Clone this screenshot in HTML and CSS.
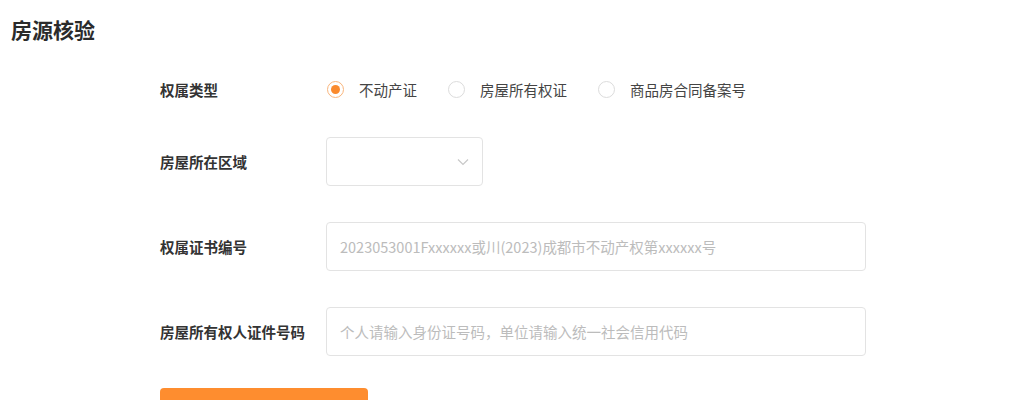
FILE: index.html
```html
<!DOCTYPE html>
<html lang="zh-CN">
<head>
<meta charset="utf-8">
<link rel="stylesheet" href="styles.css">
</head>
<body>
<div class="page">
  <h1 class="title">房源核验</h1>
  <div class="form">
    <div class="row row-radio">
      <div class="label">权属类型</div>
      <div class="radios">
        <label class="radio checked"><span class="dot"></span><span class="rtext">不动产证</span></label>
        <label class="radio"><span class="dot"></span><span class="rtext">房屋所有权证</span></label>
        <label class="radio"><span class="dot"></span><span class="rtext">商品房合同备案号</span></label>
      </div>
    </div>
    <div class="row row-select">
      <div class="label">房屋所在区域</div>
      <div class="select">
        <svg class="chev" width="12" height="8" viewBox="0 0 12 8"><path d="M1 1.5 L6 6.5 L11 1.5" fill="none" stroke="#c8c8c8" stroke-width="1.2"/></svg>
      </div>
    </div>
    <div class="row row-input">
      <div class="label">权属证书编号</div>
      <div class="input"><span class="ph">2023053001Fxxxxxx或川(2023)成都市不动产权第xxxxxx号</span></div>
    </div>
    <div class="row row-input">
      <div class="label">房屋所有权人证件号码</div>
      <div class="input"><span class="ph">个人请输入身份证号码，单位请输入统一社会信用代码</span></div>
    </div>
    <div class="btn-row">
      <div class="btn"></div>
    </div>
  </div>
</div>
</body>
</html>
```
FILE: styles.css
```css
* { box-sizing: border-box; }
html, body { margin: 0; padding: 0; background: #fff; }
body {
  font-family: "Noto Sans CJK SC", "Noto Sans", sans-serif;
  color: #333;
  overflow: hidden;
}
.page { padding: 0 0 0 11px; }
.title {
  margin: 0;
  padding-top: 14px;
  font-size: 21px;
  line-height: 30px;
  font-weight: 700;
  color: #2b2b2b;
}
.form { padding-left: 149px; padding-top: 35px; }
.row { display: flex; align-items: center; }
.label {
  width: 166px;
  font-size: 14.5px;
  font-weight: 700;
  color: #333;
  flex-shrink: 0;
}
.row-radio { height: 20px; }
.radios { display: flex; align-items: center; }
.radio { display: flex; align-items: center; font-size: 14.5px; color: #444; margin-right: 30px; }
.radio .dot {
  width: 17px; height: 17px;
  border: 1px solid #dcdcdc;
  border-radius: 50%;
  margin-right: 15px;
  margin-left: 1px;
  display: flex; align-items: center; justify-content: center;
}
.radio.checked .dot { border-color: #f9b57c; }
.radio.checked .dot::after {
  content: "";
  width: 9px; height: 9px; border-radius: 50%;
  background: #fa8a2d;
}
.row-select { margin-top: 38px; }
.select {
  width: 157px; height: 49px;
  border: 1px solid #e3e3e3;
  border-radius: 4px;
  display: flex; align-items: center; justify-content: flex-end;
  padding-right: 13px;
}
.chev { display: block; }
.row-input { margin-top: 36px; }
.input {
  width: 540px; height: 49px;
  border: 1px solid #e3e3e3;
  border-radius: 4px;
  display: flex; align-items: center;
  padding-left: 13px;
}
.ph { font-size: 14.5px; color: #bcbcbc; }
.btn-row { margin-top: 32px; }
.btn {
  width: 208px; height: 44px;
  background: #fe8d2f;
  border-radius: 4px;
}
```
